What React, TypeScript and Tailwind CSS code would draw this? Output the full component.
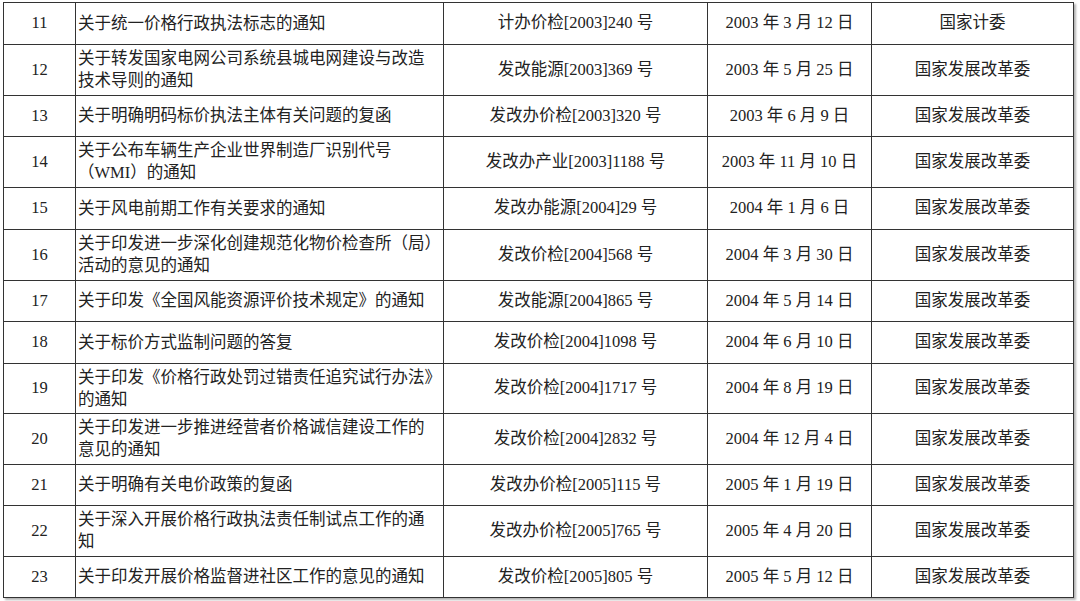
const ROWS: { no: string; title: string[]; doc: string; date: string; org: string; h: string }[] = [
  { no: "11", title: ["关于统一价格行政执法标志的通知"], doc: "计办价检[2003]240 号", date: "2003 年 3 月 12 日", org: "国家计委", h: "h-[42px]" },
  { no: "12", title: ["关于转发国家电网公司系统县城电网建设与改造", "技术导则的通知"], doc: "发改能源[2003]369 号", date: "2003 年 5 月 25 日", org: "国家发展改革委", h: "h-[51px]" },
  { no: "13", title: ["关于明确明码标价执法主体有关问题的复函"], doc: "发改办价检[2003]320 号", date: "2003 年 6 月 9 日", org: "国家发展改革委", h: "h-[41px]" },
  { no: "14", title: ["关于公布车辆生产企业世界制造厂识别代号", "（WMI）的通知"], doc: "发改办产业[2003]1188 号", date: "2003 年 11 月 10 日", org: "国家发展改革委", h: "h-[51px]" },
  { no: "15", title: ["关于风电前期工作有关要求的通知"], doc: "发改办能源[2004]29 号", date: "2004 年 1 月 6 日", org: "国家发展改革委", h: "h-[42px]" },
  { no: "16", title: ["关于印发进一步深化创建规范化物价检查所（局）", "活动的意见的通知"], doc: "发改价检[2004]568 号", date: "2004 年 3 月 30 日", org: "国家发展改革委", h: "h-[51px]" },
  { no: "17", title: ["关于印发《全国风能资源评价技术规定》的通知"], doc: "发改能源[2004]865 号", date: "2004 年 5 月 14 日", org: "国家发展改革委", h: "h-[41px]" },
  { no: "18", title: ["关于标价方式监制问题的答复"], doc: "发改价检[2004]1098 号", date: "2004 年 6 月 10 日", org: "国家发展改革委", h: "h-[42px]" },
  { no: "19", title: ["关于印发《价格行政处罚过错责任追究试行办法》", "的通知"], doc: "发改价检[2004]1717 号", date: "2004 年 8 月 19 日", org: "国家发展改革委", h: "h-[50px]" },
  { no: "20", title: ["关于印发进一步推进经营者价格诚信建设工作的", "意见的通知"], doc: "发改价检[2004]2832 号", date: "2004 年 12 月 4 日", org: "国家发展改革委", h: "h-[51px]" },
  { no: "21", title: ["关于明确有关电价政策的复函"], doc: "发改办价检[2005]115 号", date: "2005 年 1 月 19 日", org: "国家发展改革委", h: "h-[41px]" },
  { no: "22", title: ["关于深入开展价格行政执法责任制试点工作的通", "知"], doc: "发改办价检[2005]765 号", date: "2005 年 4 月 20 日", org: "国家发展改革委", h: "h-[51px]" },
  { no: "23", title: ["关于印发开展价格监督进社区工作的意见的通知"], doc: "发改价检[2005]805 号", date: "2005 年 5 月 12 日", org: "国家发展改革委", h: "h-[41px]" },
];

export default function App() {
  return (
    <div className="h-[601px] w-[1080px] overflow-hidden bg-white pl-[3px] pt-[2px] font-['Liberation_Serif','Noto_Sans_CJK_SC',serif] text-[16.5px] text-[#222]">
      <table className="w-[1070px] table-fixed border-collapse shadow-[2px_2px_2px_rgba(0,0,0,0.3)]">
        <colgroup>
          <col className="w-[72px]" />
          <col className="w-[368px]" />
          <col className="w-[264px]" />
          <col className="w-[164px]" />
          <col className="w-[202px]" />
        </colgroup>
        <tbody>
          {ROWS.map((r) => (
            <tr key={r.no} className={r.h}>
              <td className="border border-[#333] p-0 text-center align-middle">{r.no}</td>
              <td className="border border-[#333] px-[2px] py-0 align-middle leading-[22px]">
                {r.title.map((t) => (
                  <div key={t} className="whitespace-nowrap">{t}</div>
                ))}
              </td>
              <td className="border border-[#333] p-0 text-center align-middle whitespace-nowrap">{r.doc}</td>
              <td className="border border-[#333] p-0 text-center align-middle whitespace-nowrap">{r.date}</td>
              <td className="border border-[#333] p-0 text-center align-middle">{r.org}</td>
            </tr>
          ))}
        </tbody>
      </table>
    </div>
  );
}
